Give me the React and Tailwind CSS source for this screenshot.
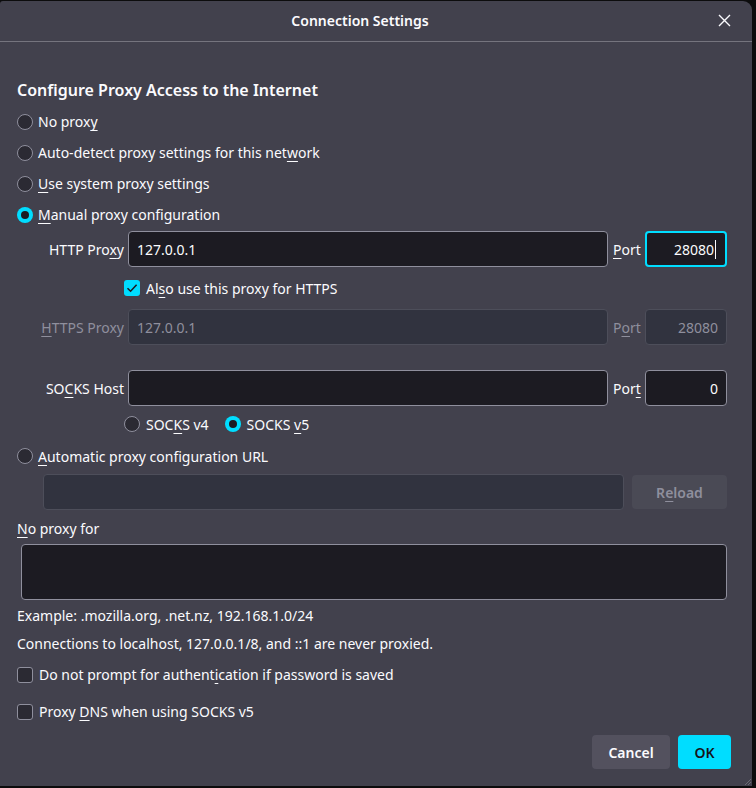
import React from 'react'

const font = { fontFamily: '"Noto Sans", "Open Sans", sans-serif' }

function K({ children }) {
  return <span className="underline underline-offset-[3px] decoration-1">{children}</span>
}

function Radio({ checked }) {
  return checked ? (
    <span className="w-4 h-4 rounded-full bg-[#00ddff] flex items-center justify-center shrink-0">
      <span className="w-2 h-2 rounded-full bg-[#1c1b22]" />
    </span>
  ) : (
    <span className="w-4 h-4 rounded-full border border-[#8f8f9d] bg-[#2b2a33] shrink-0" />
  )
}

function Check({ checked }) {
  return checked ? (
    <span className="w-4 h-4 rounded-[3px] bg-[#00ddff] flex items-center justify-center shrink-0">
      <svg width="12" height="12" viewBox="0 0 12 12" fill="none">
        <path d="M1.5 6.2 L4.6 9.2 L10.6 2.8" stroke="#1c1b22" strokeWidth="1.6" />
      </svg>
    </span>
  ) : (
    <span className="w-4 h-4 rounded-[3px] border border-[#8f8f9d] bg-[#2b2a33] shrink-0" />
  )
}

function Field({ value, disabled, focus, right, className = '' }) {
  const base = focus
    ? 'border-2 border-[#00ddff] bg-[#1c1b22] px-[9px]'
    : disabled
    ? 'border border-[#4d4e5a] bg-[#31333f] text-[#8f8f9d] px-[8px]'
    : 'border border-[#8f8f9d] bg-[#1c1b22] px-[8px]'
  return (
    <div className={`h-9 rounded-[4px] flex items-center ${right ? 'justify-end' : ''} ${base} ${className}`}>
      <span>{value}</span>
      {focus && <span className="w-px h-[19px] bg-[#fbfbfe] ml-px" />}
    </div>
  )
}

function ProxyRow({ label, value, port, disabled, focus }) {
  return (
    <div className={`flex items-center h-9 ${disabled ? 'text-[#8f8f9d]' : ''}`}>
      <div className="w-[107px] text-right">{label}</div>
      <Field value={value} disabled={disabled} className="flex-1 ml-1" />
      <div className="ml-[5px] w-[28px]">{disabled ? <>P<K>o</K>rt</> : focus ? <><K>P</K>ort</> : <>Por<K>t</K></>}</div>
      <Field value={port} disabled={disabled} focus={focus} right className="w-[82px] ml-1" />
    </div>
  )
}

export default function App() {
  return (
    <div className="w-[756px] h-[788px] bg-[#0c0c0d] pt-px text-[14px] text-[#fbfbfe]" style={font}>
      <div className="w-[752px] h-[785px] bg-[#42414d] rounded-tr-[9px] rounded-tl-[3px] flex flex-col relative">
        <div className="h-[41px] border-b border-[#75747e] flex items-center justify-center pr-[32px] pb-[2px] relative shrink-0">
          <span className="font-semibold text-[14px]">Connection Settings</span>
          <svg className="absolute left-[718px] top-[13px]" width="13" height="13" viewBox="0 0 13 13">
            <path d="M1 1 L12 12 M12 1 L1 12" stroke="#fbfbfe" strokeWidth="1.4" />
          </svg>
        </div>

        <div className="pl-[17px] pr-[25px] pt-[33px] flex flex-col">
          <div className="h-[31px] flex items-center font-semibold text-[16px] pb-[2px]">Configure Proxy Access to the Internet</div>
          <div className="h-[31px] flex items-center gap-[5px]"><Radio /><span>No prox<K>y</K></span></div>
          <div className="h-[31px] flex items-center gap-[5px]"><Radio /><span>Auto-detect proxy settings for this net<K>w</K>ork</span></div>
          <div className="h-[31px] flex items-center gap-[5px]"><Radio /><span><K>U</K>se system proxy settings</span></div>
          <div className="h-[31px] flex items-center gap-[5px]"><Radio checked /><span><K>M</K>anual proxy configuration</span></div>

          <div className="mt-px">
            <ProxyRow label={<>HTTP Pro<K>x</K>y</>} value="127.0.0.1" port="28080" focus />
          </div>
          <div className="h-[42px] flex items-center gap-[6px] ml-[107px]"><Check checked /><span>Al<K>s</K>o use this proxy for HTTPS</span></div>
          <ProxyRow label={<><K>H</K>TTPS Proxy</>} value="127.0.0.1" port="28080" disabled />
          <div className="mt-[25px]">
            <ProxyRow label={<>SO<K>C</K>KS Host</>} value="" port="0" />
          </div>
          <div className="h-9 flex items-center ml-[107px]">
            <div className="flex items-center gap-[6px]"><Radio /><span>SOC<K>K</K>S v4</span></div>
            <div className="flex items-center gap-[6px] ml-4"><Radio checked /><span>SOCKS <K>v</K>5</span></div>
          </div>
          <div className="h-[28px] flex items-center gap-[5px]"><Radio /><span><K>A</K>utomatic proxy configuration URL</span></div>
          <div className="flex items-center mt-1 ml-[26px]">
            <Field value="" disabled className="flex-1" />
            <button className="ml-2 w-[95px] h-[34px] rounded-[4px] bg-[#4a4a55] text-[#8f8f9d] font-semibold">R<K>e</K>load</button>
          </div>
          <div className="h-[32px] mt-[2px] flex items-center"><span><K>N</K>o proxy for</span></div>
          <div className="ml-1 h-[56px] rounded-[4px] border border-[#8f8f9d] bg-[#1c1b22]" />
          <div className="h-[30px] flex items-center">Example: .mozilla.org, .net.nz, 192.168.1.0/24</div>
          <div className="h-[26px] flex items-center">Connections to localhost, 127.0.0.1/8, and ::1 are never proxied.</div>
          <div className="h-[37px] flex items-center gap-[6px]"><Check /><span>Do not prompt for authent<K>i</K>cation if password is saved</span></div>
          <div className="h-[37px] flex items-center gap-[6px]"><Check /><span>Proxy <K>D</K>NS when using SOCKS v5</span></div>
          <div className="flex justify-end gap-2 mt-[5px] -mr-1">
            <button className="w-[78px] h-[34px] rounded-[4px] bg-[#53515e] font-semibold">Cancel</button>
            <button className="w-[53px] h-[34px] rounded-[4px] bg-[#00ddff] text-[#15141a] font-semibold">OK</button>
          </div>
        </div>
        <svg className="absolute right-0 bottom-0" width="9" height="9" viewBox="0 0 9 9">
          <path d="M8 2 L2 8 M8 5 L5 8" stroke="#6b6a74" strokeWidth="1" />
        </svg>
      </div>
    </div>
  )
}
